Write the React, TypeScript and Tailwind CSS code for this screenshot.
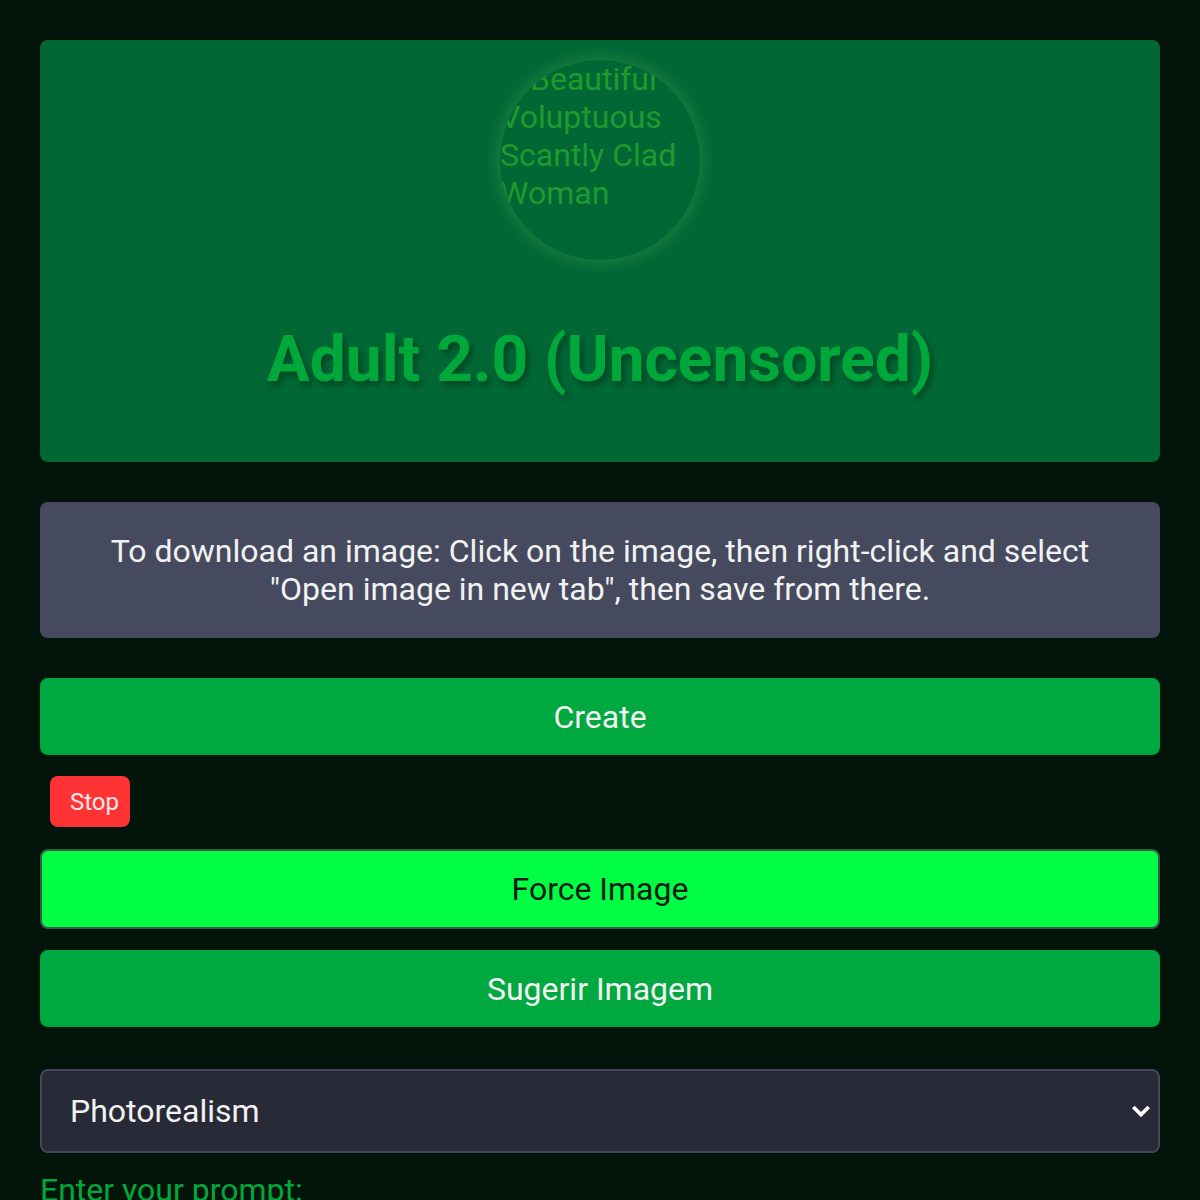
import React from "react";

export default function App() {
  return (
    <div
      className="min-h-[1200px] bg-[#03140a] px-10 pt-10"
      style={{ fontFamily: "Roboto, 'Noto Sans', sans-serif" }}
    >
      <div className="flex h-[422px] flex-col items-center rounded-lg bg-[#016835] pt-5">
        <div className="relative h-[200px] w-[200px] overflow-hidden rounded-full shadow-[0_0_18px_rgba(120,200,100,0.35)]">
          <div className="relative text-[32px] leading-[38px] text-[#1f9a2e]">
            <span className="absolute left-[26px] top-[24px] h-[4px] w-[4px] bg-[#b8c8b8]" />
            <span className="pl-[30px]">Beautiful</span>
            <br />
            Voluptuous
            <br />
            Scantly Clad
            <br />
            Woman
          </div>
        </div>
        <h1 className="mt-[68px] text-[64px] font-bold leading-none text-[#00a83c] [text-shadow:3px_4px_6px_rgba(0,0,0,0.35)]">
          Adult 2.0 (Uncensored)
        </h1>
      </div>

      <div className="mt-10 rounded-lg bg-[#464a5e] px-6 py-[30px] text-center text-[32px] leading-[38px] text-[#f2f2f2]">
        To download an image: Click on the image, then right-click and select
        <br />
        "Open image in new tab", then save from there.
      </div>

      <button className="mt-10 flex h-[77px] w-full items-center justify-center rounded-lg bg-[#00a840] text-[32px] text-[#f2f2f2]">
        Create
      </button>

      <div className="mt-[21px] pl-[10px]">
        <button className="flex h-[51px] w-[80px] items-center justify-start rounded-lg bg-[#ff3333] pl-[20px] text-[24px] text-[#fbeaea]">
          Stop
        </button>
      </div>

      <button className="mt-[22px] flex h-[80px] w-full items-center justify-center rounded-lg border-2 border-[#3c5a48] bg-[#00ff44] text-[32px] text-[#0d1a12]">
        Force Image
      </button>

      <button className="mt-[21px] flex h-[77px] w-full items-center justify-center rounded-lg bg-[#00a840] text-[32px] text-[#f2f2f2]">
        Sugerir Imagem
      </button>

      <div className="mt-[42px] flex h-[84px] w-full items-center justify-between rounded-lg border-2 border-[#454957] bg-[#282a37] pl-[28px] pr-[6px] text-[32px] text-[#f2f2f2]">
        <span>Photorealism</span>
        <svg width="22" height="22" viewBox="0 0 24 24" fill="none" stroke="#ffffff" strokeWidth="4" strokeLinecap="square">
          <path d="M5 9l7 7 7-7" />
        </svg>
      </div>

      <div className="mt-[18px] text-[32px] leading-[38px] text-[#00a83c]">Enter your prompt:</div>
    </div>
  );
}
